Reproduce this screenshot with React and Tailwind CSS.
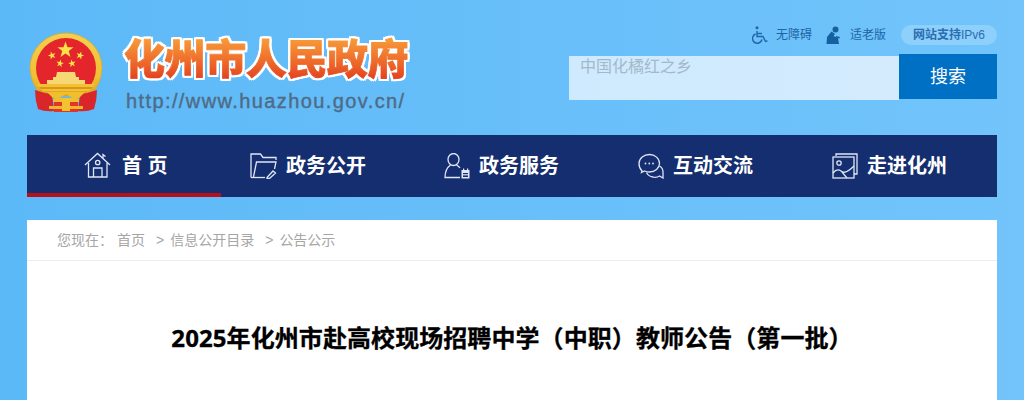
import { useState } from "react";

const CJK = "font-['Liberation_Sans','Noto_Sans_CJK_SC',sans-serif]";

// five pointed star as a polygon string
function starPoints(cx, cy, r, rot = 0) {
  const pts = [];
  for (let i = 0; i < 10; i++) {
    const rad = i % 2 === 0 ? r : r * 0.4;
    const a = -Math.PI / 2 + (i * Math.PI) / 5 + rot;
    pts.push(`${(cx + rad * Math.cos(a)).toFixed(2)},${(cy + rad * Math.sin(a)).toFixed(2)}`);
  }
  return pts.join(" ");
}

function Emblem() {
  return (
    <svg width="76" height="84" viewBox="0 0 76 84" className="shrink-0">
      <defs>
        <linearGradient id="ring" x1="0" y1="0" x2="0" y2="1">
          <stop offset="0" stopColor="#f4d04e" />
          <stop offset="0.7" stopColor="#f0bf33" />
          <stop offset="1" stopColor="#dca21f" />
        </linearGradient>
        <clipPath id="disc">
          <rect x="0" y="0" width="76" height="55" />
        </clipPath>
      </defs>
      <path d="M3 38 A36 35 0 0 1 75 38 Q74 56 62 66 H16 Q4 56 3 38 Z" fill="url(#ring)" stroke="#e2a92a" strokeWidth="0.8" />
      <circle cx="39" cy="38" r="30" fill="#e4252b" clipPath="url(#disc)" />
      <polygon points={starPoints(38.5, 20, 8.5)} fill="#fbe24a" />
      <polygon points={starPoints(25, 25.5, 4.2, -0.3)} fill="#fbe24a" />
      <polygon points={starPoints(53, 25.5, 4.2, 0.3)} fill="#fbe24a" />
      <polygon points={starPoints(33, 33.5, 4, 0.2)} fill="#fbe24a" />
      <polygon points={starPoints(45, 33.5, 4, -0.2)} fill="#fbe24a" />
      <path d="M29 47 L30 42 H48 L49 47 H52 V50 H58 V54 H20 V50 H26 V47 Z" fill="#f6d774" />
      <path d="M9 54 H69 L62 61 H16 Z" fill="#f2c233" />
      <path d="M12 57 H66 L64 59 H14 Z" fill="#d9951c" />
      <path d="M8 60 Q16 63 25 64 L27 81 Q18 82 11 79 Q8 70 8 60 Z" fill="#d8262a" />
      <path d="M70 60 Q62 63 53 64 L51 81 Q60 82 67 79 Q70 70 70 60 Z" fill="#d8262a" />
      <path d="M20 62 H58 L52 68 H46 L39 64 L32 68 H26 Z" fill="#f1be2e" />
      <path d="M27 70 H51 V82 H27 Z" fill="#e3342a" />
      <path d="M26 69 Q33 65 39 70 Q45 65 52 69 V72 H26 Z" fill="#f1be2e" />
      <path d="M22 76 H56 V79 H22 Z" fill="#efb82a" />
      <path d="M35 68 H43 V81 H35 Z" fill="#f2c233" />
    </svg>
  );
}

function WheelchairIcon() {
  return (
    <svg width="16" height="18" viewBox="0 0 16 18" fill="none" stroke="#1d64a8" strokeWidth="1.4">
      <circle cx="5" cy="1.8" r="1.5" fill="#1d64a8" stroke="none" />
      <path d="M5 5 V10.5 H11 L13.5 15.5 L15.5 14.8" />
      <path d="M5 7.5 H10" />
      <path d="M3.5 8 A4.8 4.8 0 1 0 10 13.5" />
    </svg>
  );
}

function ElderIcon() {
  return (
    <svg width="15" height="18" viewBox="0 0 15 18" fill="#15609f">
      <circle cx="9.5" cy="3.4" r="3" />
      <path d="M5.5 5.5 L9 8 L7.5 10 L12 12 L13 18 H0.5 L1 11 Z" />
      <path d="M10 10 L14 11 L13.4 12.4 L10 11.4 Z" />
    </svg>
  );
}

const navStroke = { fill: "none", stroke: "#dfe6f7", strokeWidth: 1.3 };

function HomeIcon() {
  return (
    <svg width="28" height="27" viewBox="0 0 28 27" {...navStroke}>
      <path d="M1 13 L13.5 1.5 L26 13" />
      <path d="M19 6 V2.5 L21.5 4.5" />
      <path d="M4.5 11 V25 H23 V11" />
      <circle cx="13.7" cy="10.5" r="2.2" />
      <path d="M9.5 25 V16 H18 V25" />
    </svg>
  );
}

function FolderIcon() {
  return (
    <svg width="27" height="26" viewBox="0 0 27 26" {...navStroke}>
      <path d="M1 24.5 V1 H10.5 L13 4.5 H26 V7" />
      <path d="M1 24.5 H15" />
      <path d="M3.5 24 L6.5 9 H26 L24.5 16" />
      <path d="M17 24.5 L23 18 L25.5 20 L19.5 25.5 L17 25.5 Z" />
    </svg>
  );
}

function PersonIcon() {
  return (
    <svg width="26" height="26" viewBox="0 0 26 26" {...navStroke}>
      <ellipse cx="9.5" cy="6.5" rx="5.5" ry="6" />
      <path d="M6.5 12 Q1 16 1 24.5 H16" />
      <path d="M12.5 12 Q15 13.5 16 15" />
      <rect x="17.5" y="17" width="8" height="8.5" fill="#dfe6f7" stroke="none" />
      <rect x="19" y="20" width="5" height="1.2" fill="#152e6f" stroke="none" />
      <rect x="19" y="22.4" width="5" height="1.6" fill="#152e6f" stroke="none" />
      <rect x="19" y="15.5" width="1.2" height="2" fill="#dfe6f7" stroke="none" />
      <rect x="23" y="15.5" width="1.2" height="2" fill="#dfe6f7" stroke="none" />
    </svg>
  );
}

function ChatIcon() {
  return (
    <svg width="26" height="26" viewBox="0 0 26 26" {...navStroke}>
      <path d="M4 18 Q1 15 1 10.5 C1 5 6 1.5 11.5 1.5 C17 1.5 21.5 5.5 21.5 10.5 C21.5 15 17 19 11.5 19 Q8.5 19 6.5 18 L3.5 19.5 Z" />
      <path d="M21.5 13 Q25 15 25 19 V25 L21.5 23 Q18.5 25 15 24 Q10.5 23.5 8.5 19.5" />
      <circle cx="7.5" cy="10.5" r="0.9" fill="#dfe6f7" stroke="none" />
      <circle cx="11.3" cy="10.5" r="0.9" fill="#dfe6f7" stroke="none" />
      <circle cx="15" cy="10.5" r="0.9" fill="#dfe6f7" stroke="none" />
    </svg>
  );
}

function PictureIcon() {
  return (
    <svg width="26" height="26" viewBox="0 0 26 26" {...navStroke}>
      <path d="M4 3 V1 H25 V21 H22" />
      <rect x="1" y="4" width="21" height="21" />
      <circle cx="7" cy="10" r="2.2" />
      <path d="M1 20 Q5 15 9 18 Q13 22 22 13" />
      <path d="M10 19 L15 25" />
    </svg>
  );
}

const navItems = [
  { label: "首 页", icon: <HomeIcon />, active: true, pad: "pl-[57px] gap-[10px]" },
  { label: "政务公开", icon: <FolderIcon />, pad: "pl-[29px] gap-[9px]" },
  { label: "政务服务", icon: <PersonIcon />, pad: "pl-[29px] gap-[9px]" },
  { label: "互动交流", icon: <ChatIcon />, pad: "pl-[29px] gap-[9px]" },
  { label: "走进化州", icon: <PictureIcon />, pad: "pl-[29px] gap-[9px]" },
];

export default function App() {
  const [keyword, setKeyword] = useState("");

  return (
    <div className={`min-h-[400px] h-[400px] overflow-hidden bg-gradient-to-r from-[#5cb9f7] to-[#72c4fb] ${CJK}`}>
      <div className="w-[970px] mx-auto">
        {/* header */}
        <div className="h-[135px] flex justify-between">
          <div className="flex items-start pt-[30px]">
            <Emblem />
            <div className="ml-[21px] pt-[5px]">
              <div className="text-[41px] leading-[50px] tracking-[-0.4px] font-black w-[295px] whitespace-nowrap bg-gradient-to-b from-[#f9a23c] to-[#df2a1c] bg-clip-text text-transparent [-webkit-text-stroke:0.8px_transparent] [filter:drop-shadow(2px_0_0_#fff)_drop-shadow(-2px_0_0_#fff)_drop-shadow(0_2px_0_#fff)_drop-shadow(0_-2px_0_#fff)]">
                化州市人民政府
              </div>
              <div className="mt-[4px] ml-[2px] text-[20px] leading-[24px] tracking-[1.4px] text-[#4f6b87] [-webkit-text-stroke:0.4px_#4f6b87]">
                http://www.huazhou.gov.cn/
              </div>
            </div>
          </div>

          <div className="w-[428px] pt-[25px]">
            <div className="flex items-center justify-end h-[20px] text-xs text-[#1d64a8]">
              <WheelchairIcon />
              <span className="ml-[8px]">无障碍</span>
              <span className="ml-[14px]"><ElderIcon /></span>
              <span className="ml-[9px]">适老版</span>
              <span className="ml-[15px] w-[96px] h-[20px] leading-[20px] text-center rounded-full bg-[#8dd0fb] text-[#2a6db0]">
                <b>网站支持</b>IPv6
              </span>
            </div>
            <div className="flex items-start mt-[9px]">
              <input
                value={keyword}
                onChange={(e) => setKeyword(e.target.value)}
                placeholder="中国化橘红之乡"
                className="mt-[2px] w-[330px] h-[44px] pl-[11px] pb-[22px] text-base outline-none bg-gradient-to-r from-[#cfeafe] to-[#d3ebfd] text-[#555] placeholder:text-[#a3b9c9]"
              />
              <button className="w-[98px] h-[45px] bg-[#0070c4] text-white text-lg">搜索</button>
            </div>
          </div>
        </div>

        {/* nav */}
        <div className="h-[62px] bg-[#152e6f] flex">
          {navItems.map((item) => (
            <a
              key={item.label}
              href="#"
              className={`w-[194px] shrink-0 flex items-center ${item.pad} pt-[3px] border-b-4 ${item.active ? "border-[#b70f1c]" : "border-transparent"}`}
            >
              {item.icon}
              <span className="text-white text-xl font-bold whitespace-pre">{item.label}</span>
            </a>
          ))}
        </div>

        {/* content */}
        <div className="mt-[23px] bg-white h-[200px]">
          <div className="h-[41px] border-b border-[#eeeeee] flex items-center pl-[30px] text-sm text-[#a6a6a6] whitespace-pre">
            <span>您现在：</span>
            <a href="#" className="ml-[4px]">首页</a>
            <span className="ml-[11px]">&gt;</span>
            <a href="#" className="ml-[6px]">信息公开目录</a>
            <span className="ml-[11px]">&gt;</span>
            <a href="#" className="ml-[6px]">公告公示</a>
          </div>
          <h1 className="mt-[59px] text-center text-2xl leading-[36px] tracking-[0.08px] font-bold text-black [-webkit-text-stroke:0.3px_#000] font-['Noto_Sans','Noto_Sans_CJK_SC',sans-serif]">
            2025年化州市赴高校现场招聘中学（中职）教师公告（第一批）
          </h1>
        </div>
      </div>
    </div>
  );
}
